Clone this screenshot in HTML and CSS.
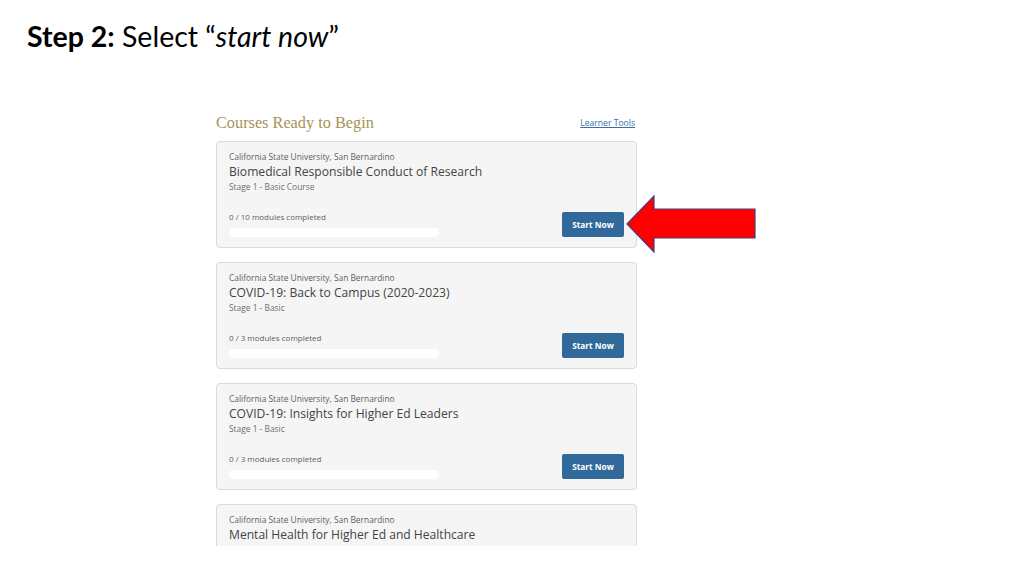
FILE: index.html
```html
<!DOCTYPE html>
<html lang="en">
<head>
<meta charset="utf-8">
<title>Step 2: Select start now</title>
<link rel="stylesheet" href="styles.css">
</head>
<body>
<div class="slide">
  <h1 class="step"><b>Step 2:</b> Select “<i>start now</i>”</h1>
  <div class="shot">
    <div class="panel">
      <div class="panel-head">
        <h2 class="panel-title">Courses Ready to Begin</h2>
        <a class="tools" href="#">Learner Tools</a>
      </div>
      <div class="cards">
        <div class="card">
          <div class="org">California State University, San Bernardino</div>
          <div class="course">Biomedical Responsible Conduct of Research</div>
          <div class="stage">Stage 1 - Basic Course</div>
          <div class="card-foot">
            <div class="progress">
              <div class="count">0 / 10 modules completed</div>
              <div class="bar"></div>
            </div>
            <button class="start">Start Now</button>
          </div>
        </div>
        <div class="card">
          <div class="org">California State University, San Bernardino</div>
          <div class="course">COVID-19: Back to Campus (2020-2023)</div>
          <div class="stage">Stage 1 - Basic</div>
          <div class="card-foot">
            <div class="progress">
              <div class="count">0 / 3 modules completed</div>
              <div class="bar"></div>
            </div>
            <button class="start">Start Now</button>
          </div>
        </div>
        <div class="card">
          <div class="org">California State University, San Bernardino</div>
          <div class="course">COVID-19: Insights for Higher Ed Leaders</div>
          <div class="stage">Stage 1 - Basic</div>
          <div class="card-foot">
            <div class="progress">
              <div class="count">0 / 3 modules completed</div>
              <div class="bar"></div>
            </div>
            <button class="start">Start Now</button>
          </div>
        </div>
        <div class="card">
          <div class="org">California State University, San Bernardino</div>
          <div class="course">Mental Health for Higher Ed and Healthcare</div>
        </div>
      </div>
    </div>
  </div>
  <svg class="arrow" width="140" height="70" viewBox="0 0 140 70" aria-hidden="true">
    <polygon points="7,34 34,6 34,19 135,19 135,48 34,48 34,62" fill="#ff0000" stroke="#4a3c7e" stroke-width="1.2" stroke-linejoin="miter"/>
  </svg>
</div>
</body>
</html>
```

FILE: styles.css
```css
html, body {
  margin: 0;
  padding: 0;
  background: #ffffff;
}

.slide {
  position: relative;
  width: 1024px;
  height: 576px;
  overflow: hidden;
}

.step {
  margin: 0;
  padding: 19px 0 0 27px;
  font-family: Lato, "Open Sans", sans-serif;
  font-weight: 400;
  font-size: 28.5px;
  line-height: 34px;
  color: #000000;
}

.step b {
  font-weight: 700;
}

.shot {
  margin: 60px 0 0 216px;
  width: 421px;
  height: 433px;
  overflow: hidden;
}

.panel {
  font-family: "Open Sans", sans-serif;
}

.panel-head {
  display: flex;
  justify-content: space-between;
  align-items: center;
  height: 20px;
  margin-bottom: 8px;
}

.panel-title {
  margin: 0;
  font-family: "Liberation Serif", serif;
  font-weight: 400;
  font-size: 16.3px;
  color: #a99257;
}

.tools {
  margin-right: 2px;
  font-size: 8.6px;
  color: #3b6ea6;
  text-decoration: underline;
}

.cards {
  display: flex;
  flex-direction: column;
  gap: 14px;
}

.card {
  box-sizing: border-box;
  height: 107px;
  padding: 8px 12px 11px 12px;
  background: #f5f5f5;
  border: 1px solid #dadada;
  border-radius: 4px;
  flex-shrink: 0;
}

.org {
  font-size: 8.4px;
  line-height: 13px;
  color: #5e5e5e;
}

.course {
  font-size: 12.1px;
  line-height: 17px;
  color: #444444;
}

.stage {
  font-size: 8.4px;
  line-height: 13px;
  color: #6e6e6e;
}

.card-foot {
  display: flex;
  justify-content: space-between;
  align-items: flex-start;
  margin-top: 18px;
}

.progress {
  display: flex;
  flex-direction: column;
  gap: 5px;
}

.count {
  font-size: 8px;
  line-height: 12px;
  color: #5e5e5e;
}

.bar {
  width: 210px;
  height: 9px;
  border-radius: 5px;
  background: #ffffff;
}

.start {
  width: 62px;
  height: 25px;
  margin-top: 1px;
  padding: 0;
  border: none;
  border-radius: 2px;
  background: #31699a;
  color: #ffffff;
  font-family: "Open Sans", sans-serif;
  font-weight: 700;
  font-size: 8.3px;
}

.arrow {
  position: absolute;
  left: 620px;
  top: 190px;
}
```
